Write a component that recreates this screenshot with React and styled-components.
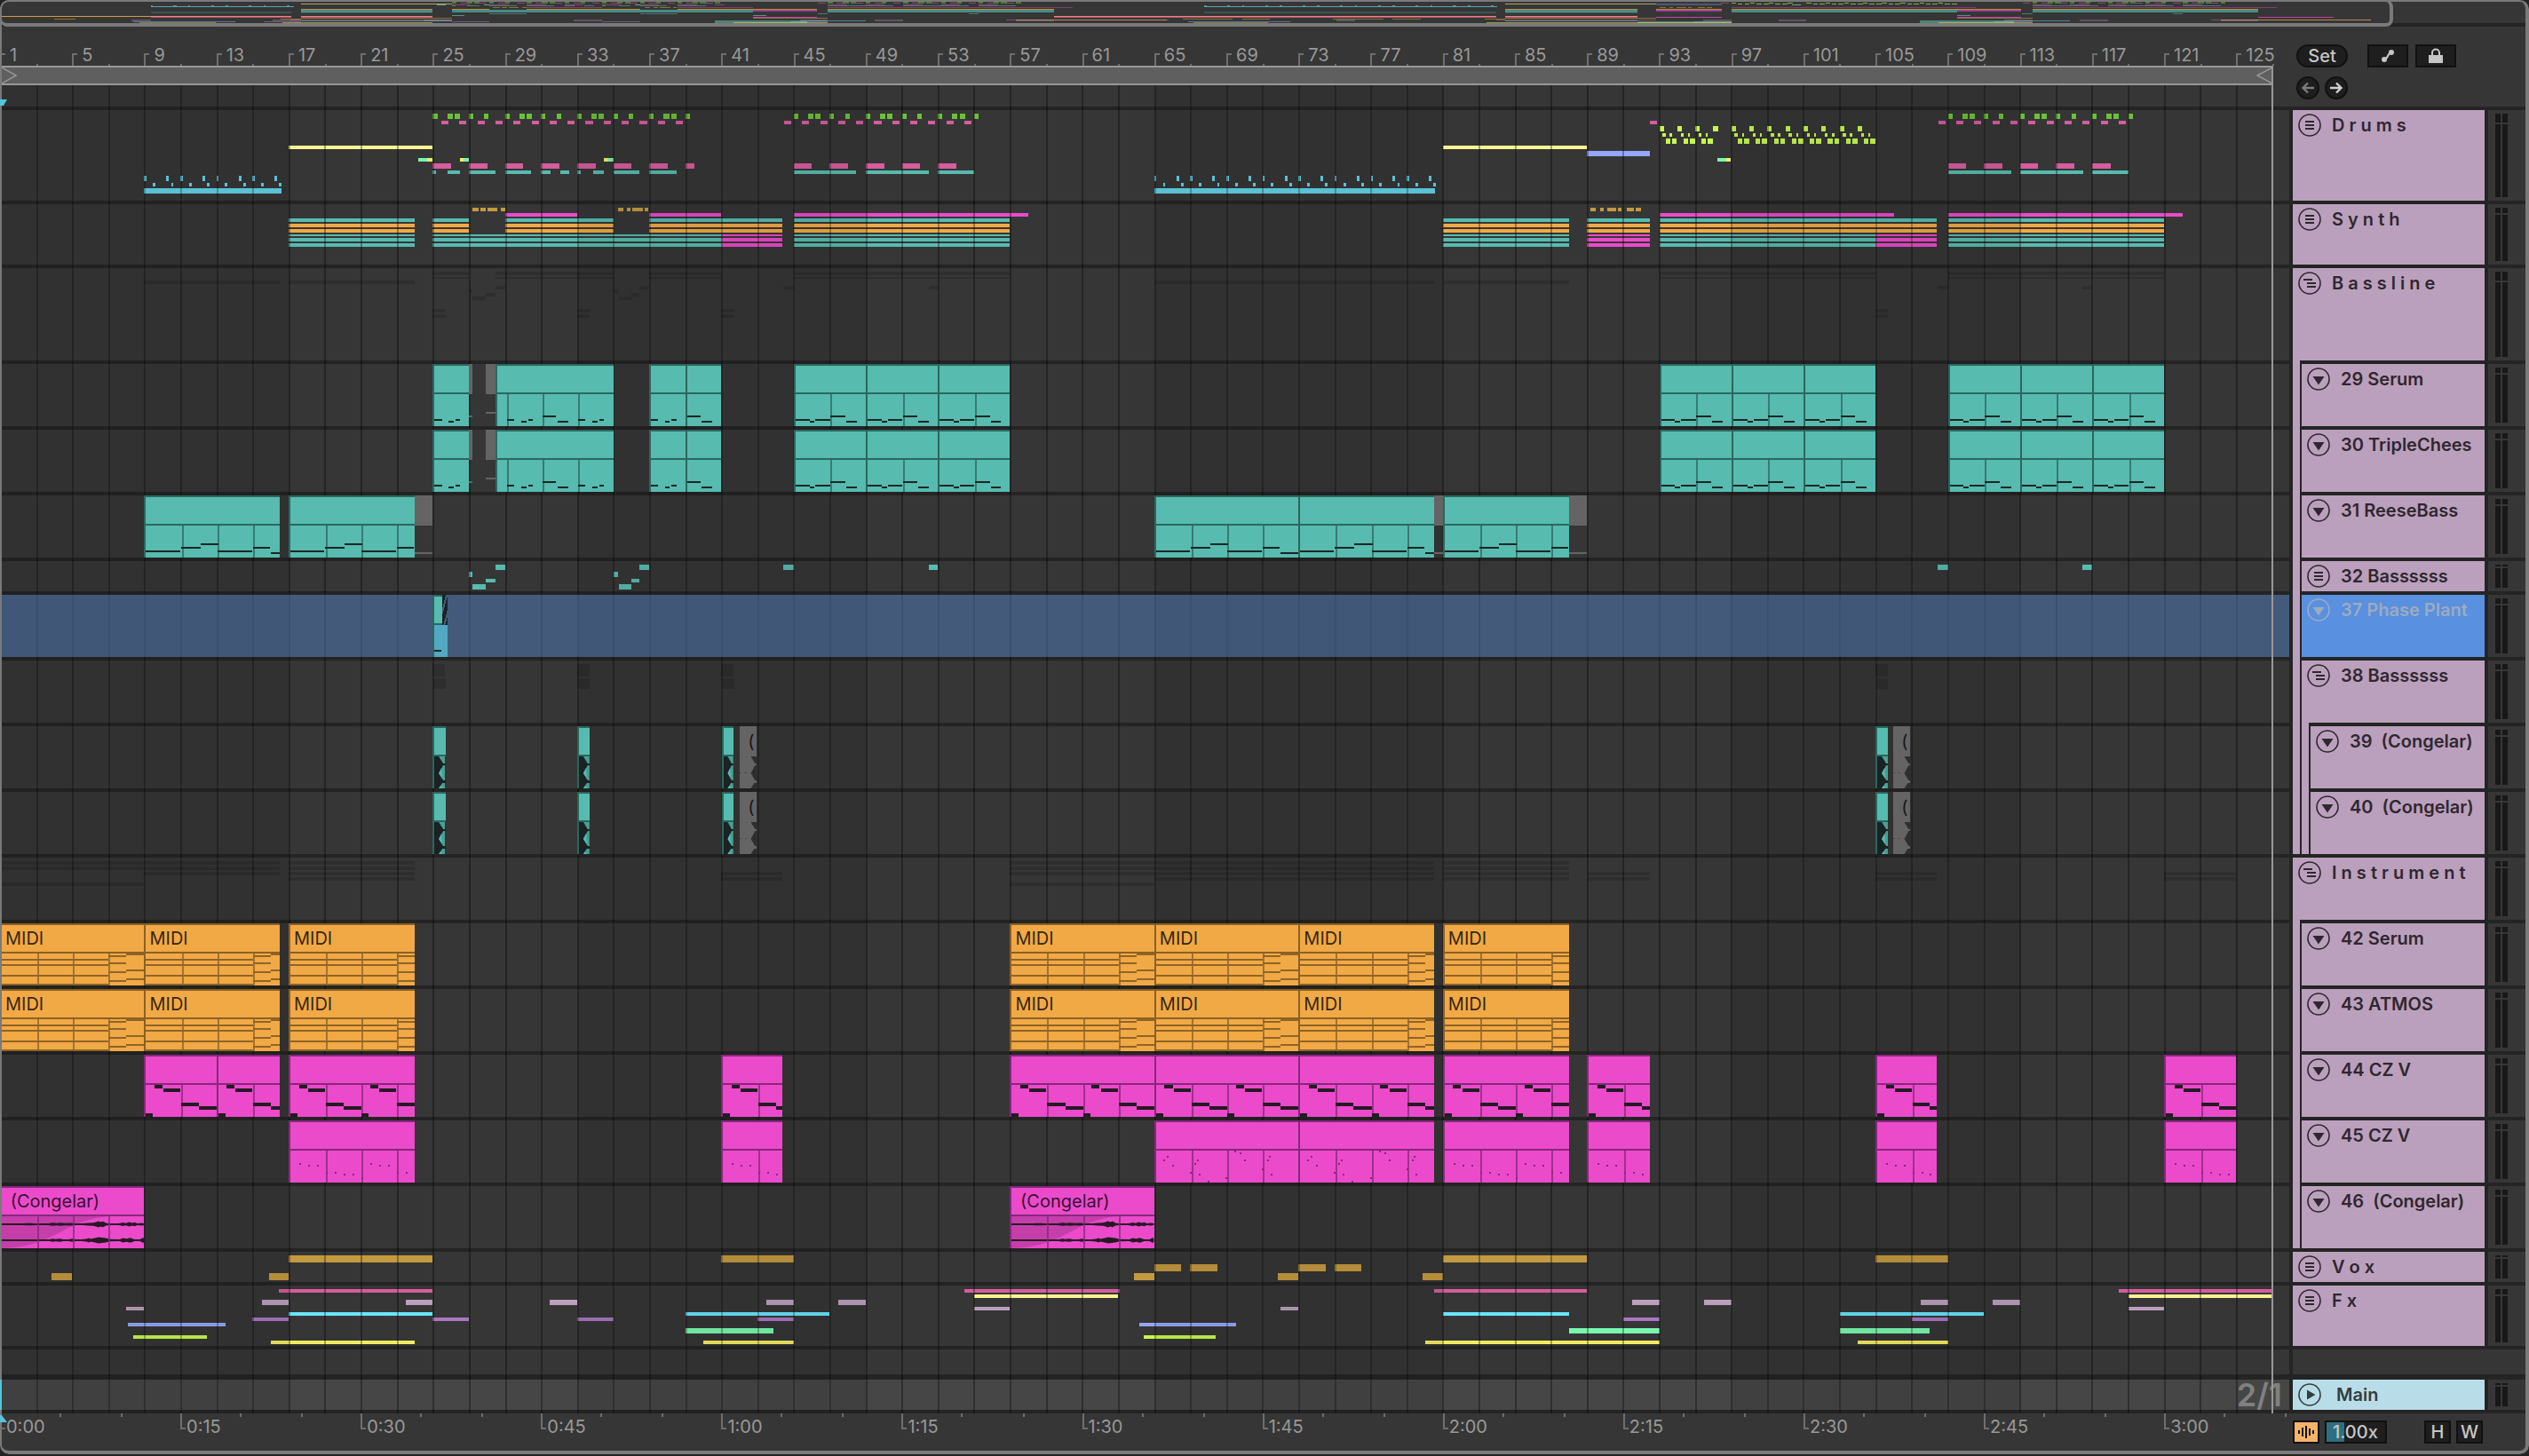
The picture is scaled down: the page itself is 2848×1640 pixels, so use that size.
import React from "react";
import styled, { createGlobalStyle } from "styled-components";

const GlobalStyle = createGlobalStyle`
    * {
        box-sizing: border-box;
    }

    body {
        margin: 0;
        background: #232323;
        font-family: Inter, "Liberation Sans", sans-serif;
        font-size: 20px;
        line-height: 24px;
    }

    button, input {
        font: inherit;
        margin: 0;
        padding: 0;
        border: 0;
        background: none;
        color: inherit;
    }
`

/* ---------- colours ---------- */

const TEAL = "#57bbaf";
const TEAL_LINE = "#2a675f";
const ORANGE = "#f1a946";
const ORANGE_LINE = "#8b6024";
const MAGENTA = "#eb4acb";
const MAGENTA_LINE = "#86287a";
const PINK = "#d65d9e";
const GREEN = "#6ac236";
const LIME = "#c7f84e";
const CYAN = "#63d2e8";
const AQUA = "#6ae4fc";
const PALE = "#fbf491";
const YELLOW = "#f4ec62";
const BLUE = "#96a6fb";
const MINT = "#7af8ae";
const OCHRE = "#c49a3f";
const MAUVE = "#bba0bd";
const PURPLE = "#a877c0";
const GHOST = "rgba(0, 0, 0, 0.14)";
const OFF = "#646464";

/* ---------- time ---------- */

// bars that fit in the arrangement view and in the overview strip
const BARS = 126.93;
const OVERVIEW_BARS = 134.2;

const place = (from, to, total = BARS) => ({
    left: `${((from - 1) / total) * 100}%`,
    width: `${((to - from) / total) * 100}%`,
});

const range = (from, to, step = 1) => {
    const list = [];
    for (let n = from; n <= to; n += step) list.push(n);
    return list;
};

/* ---------- notes of the folded groups: [from, to] in bars ---------- */

const kick = (n) => [[n, n + 0.25], [n + 0.8, n + 1.1], [n + 1.2, n + 1.5], [n + 2, n + 2.25]];
const kickFull = (n) => [...kick(n), [n + 2.85, n + 3.1]];
const hit = (offset, width) => (n) => [n + offset, n + offset + width];

const chords = [[17, 24], [25, 27], [29, 35], [37, 44.4], [45, 57], [81, 88], [89, 92.5], [93, 108.4], [109, 121]];
const pads = [[17, 24], [25, 41], [45, 57], [81, 88], [93, 105], [109, 121]];
const leads = [[41, 44.4], [89, 92.5], [105, 108.4]];
const bassSteps = [
    { y: 4, h: 6, at: [[28.45, 29], [36.45, 37], [44.45, 45], [52.5, 53], [108.45, 109], [116.45, 117]] },
    { y: 12, h: 6, at: [[27, 27.2], [35, 35.25]] },
    { y: 20, h: 4, at: [[27.95, 28.45], [36, 36.45]] },
    { y: 26, h: 6, at: [[27.2, 27.95], [35.3, 36]] },
];

const DRUMS = [
    { y: 4, h: 6, color: GREEN, at: [25, 29, 33, 45, 49, 109, 113].flatMap(kickFull).concat([37, 53, 117].flatMap(kick)) },
    { y: 12, h: 4, color: PINK, at: [...range(25, 38), ...range(44, 54), 92, ...range(108, 118)].map(hit(0.47, 0.4)) },
    { y: 18, h: 6, color: LIME, at: range(93, 104).map(hit(0, 0.25)) },
    { y: 26, h: 4, color: LIME, at: range(93, 104).filter((n) => n !== 96).flatMap((n) => [[n + 0.18, n + 0.35], [n + 0.58, n + 0.7]]) },
    { y: 32, h: 6, color: LIME, at: range(93, 104).filter((n) => n !== 96).flatMap((n) => [[n + 0.35, n + 0.6], [n + 0.7, n + 0.98]]) },
    { y: 40, h: 4, color: PALE, at: [[17, 25], [81, 89]] },
    { y: 46, h: 6, color: BLUE, at: [[89, 92.5]] },
    { y: 54, h: 4, color: MINT, at: [[24.2, 24.7], [26.7, 27], [34.75, 35], [96.2, 96.7]] },
    { y: 54, h: 4, color: YELLOW, at: [[24.7, 25], [26.5, 26.7], [34.5, 34.75], [96.7, 96.95]] },
    { y: 60, h: 6, color: PINK, at: [...range(25, 37, 2), ...range(45, 53, 2), ...range(109, 117, 2)].map(hit(0, 1.02)).concat([[39, 39.5]]) },
    {
        y: 68, h: 4, color: TEAL,
        at: [[25, 25.2], [25.8, 26.5], [27, 28.45], [29, 30.45], [31, 31.55], [32.05, 32.55], [33, 33.2], [33.9, 34.5], [35, 36.45],
            [37, 38.5], [45, 48.45], [49, 52.5], [53, 55], [109, 112.5], [113, 116.5], [117, 119]],
    },
    {
        y: 74, h: 6, color: CYAN,
        at: [...range(9, 16), ...range(65, 80)].map((n) => (n % 2 ? [n, n + 0.12] : [n + 0.22, n + 0.37])),
    },
    { y: 82, h: 4, color: CYAN, at: [...range(9, 16), ...range(65, 80)].map(hit(0.48, 0.14)) },
    { y: 88, h: 6, color: CYAN, at: [[9, 16.6], [65, 80.55]] },
];

const SYNTH = [
    {
        y: 4, h: 4, color: OCHRE,
        at: [[27.2, 27.55], [27.65, 27.95], [28.05, 28.55], [28.75, 29], [35.25, 35.55], [35.75, 35.95], [36.05, 36.65], [36.75, 36.95],
            [89.2, 89.5], [89.7, 89.9], [90.1, 90.6], [90.7, 90.9], [91.2, 91.6], [91.7, 92]],
    },
    { y: 10, h: 4, color: MAGENTA, at: [[29, 33], [37, 41], [45, 58], [93, 106], [109, 122]] },
    { y: 16, h: 4, color: TEAL, at: chords },
    { y: 22, h: 4, color: ORANGE, at: chords },
    { y: 28, h: 4, color: ORANGE, at: chords },
    { y: 34, h: 2, color: TEAL, at: pads },
    { y: 38, h: 4, color: TEAL, at: pads },
    { y: 44, h: 4, color: TEAL, at: pads },
    { y: 34, h: 2, color: MAGENTA, at: leads },
    { y: 38, h: 4, color: MAGENTA, at: leads },
    { y: 44, h: 4, color: MAGENTA, at: leads },
];

const serumGhost = [[25, 27], [28.45, 35], [37, 41], [45, 57], [93, 105], [109, 121]];
const BASSLINE = [
    { y: 4, h: 4, color: GHOST, at: serumGhost },
    { y: 10, h: 2, color: GHOST, at: serumGhost },
    { y: 14, h: 4, color: GHOST, at: [[9, 16.5], [17, 24], [65, 80.5], [81, 88]] },
    { y: 20, h: 4, color: GHOST, at: bassSteps[0].at },
    { y: 24, h: 4, color: GHOST, at: bassSteps[1].at },
    { y: 28, h: 4, color: GHOST, at: bassSteps[2].at },
    { y: 32, h: 4, color: GHOST, at: bassSteps[3].at },
    { y: 46, h: 4, color: GHOST, at: [25, 33, 41, 105].map(hit(0, 0.7)) },
    { y: 52, h: 4, color: GHOST, at: [25, 33, 41, 105].map(hit(0, 0.7)) },
];

const BASS_FOLD = [
    { y: 4, h: 14, color: GHOST, at: [25, 33, 41, 105].map(hit(0, 0.68)) },
    { y: 20, h: 12, color: GHOST, at: [25, 33, 41, 105].map(hit(0.05, 0.65)) },
];

const czGhost = [[17, 24], [41, 44.4], [65, 80.5], [81, 88], [89, 92.5], [105, 108.4], [121, 125]];
const INSTRUMENT = [
    { y: 4, h: 4, color: GHOST, at: [[1, 16.5], [17, 24], [57, 80.5], [81, 88]] },
    { y: 10, h: 4, color: GHOST, at: [[1, 16.5], [17, 24], [57, 80.5], [81, 88]] },
    { y: 16, h: 4, color: GHOST, at: [[9, 16.5], [57, 65], ...czGhost] },
    { y: 22, h: 4, color: GHOST, at: czGhost },
    { y: 28, h: 4, color: GHOST, at: [[1, 9], [57, 65]] },
];

const VOX = [
    { y: 4, h: 8, color: OCHRE, at: [[17, 25], [41, 45], [81, 89], [105, 109]] },
    { y: 14, h: 8, color: OCHRE, at: [[65, 66.5], [67, 68.5], [73, 74.5], [75, 76.5]] },
    { y: 24, h: 8, color: OCHRE, at: [[3.87, 5], [15.9, 17], [63.85, 65], [71.85, 73], [79.9, 81]] },
];

const FX = [
    { y: 4, h: 4, color: PINK, at: [[16.45, 25], [54.45, 63.1], [80.5, 89], [118.5, 127]] },
    { y: 10, h: 4, color: PALE, at: [[55, 63], [119, 127]] },
    { y: 16, h: 6, color: MAUVE, at: [15.5, 23.5, 31.5, 43.5, 47.5, 91.5, 95.5, 107.5, 111.5].map(hit(0, 1.5)) },
    { y: 24, h: 4, color: MAUVE, at: [[8, 9], [55, 57], [72, 73], [119, 121]] },
    { y: 30, h: 4, color: AQUA, at: [[17, 25], [39, 47], [81, 88], [103, 111]] },
    { y: 36, h: 4, color: PURPLE, at: [15, 25, 33, 43, 91, 107].map(hit(0, 2)) },
    { y: 42, h: 4, color: BLUE, at: [[8.1, 13.5], [64.15, 69.55]] },
    { y: 48, h: 6, color: MINT, at: [[39, 43.9], [88, 93], [103, 108]] },
    { y: 56, h: 4, color: LIME, at: [[8.4, 12.45], [64.4, 68.4]] },
    { y: 62, h: 4, color: YELLOW, at: [[16, 24], [40, 45], [80, 93], [104, 109]] },
];

/* ---------- clips of the open tracks, notes: [start, length, y] ---------- */

const riffA = [[0, 0.42, 62], [0.8, 0.3, 64], [1.2, 0.28, 62]];
const riffB = [[0, 0.78, 58], [0.85, 0.6, 64]];
const riffLong = [[0, 0.8, 62], [0.8, 0.3, 64], [1.15, 0.82, 62], [2, 0.85, 58], [2.9, 0.6, 64]];
const shift = (notes, by) => notes.map(([s, l, y]) => [s + by, l, y]);

const serumClips = [
    { from: 25, to: 27, notes: riffA },
    { from: 27, to: 27.2, off: true, notes: [[0, 1, 58]] },
    { from: 27.95, to: 28.45, off: true, notes: [[0, 1, 54]] },
    { from: 28.45, to: 35, notes: [...shift(riffA, 0.55), ...shift(riffB, 2.55), ...shift(riffA, 4.55)] },
    { from: 37, to: 39, notes: riffA },
    { from: 39, to: 41, notes: riffB },
    ...[45, 49, 53, 93, 97, 101, 109, 113, 117].map((n) => ({ from: n, to: n + 4, notes: riffLong })),
];

const reese = [[0, 1.9, 62], [1.95, 1.1, 58], [3.05, 1, 54], [4, 1.95, 62], [6, 0.95, 58], [7, 1, 64]];
const reeseClips = [
    { from: 9, to: 16.5, notes: reese },
    { from: 17, to: 24, notes: reese },
    { from: 24, to: 25, off: true, notes: [[0, 1, 64]] },
    { from: 65, to: 73, notes: reese },
    { from: 73, to: 80.5, notes: reese },
    { from: 80.5, to: 81, off: true, notes: [[0, 1, 64]] },
    { from: 81, to: 88, notes: reese },
    { from: 88, to: 89, off: true, notes: [[0, 1, 64]] },
];

const plantClips = [{ from: 25, to: 25.8, hatched: true, notes: [[0, 0.4, 62]] }];

const frozenClips = [
    { from: 25, to: 25.7, frozen: true },
    { from: 33, to: 33.68, frozen: true },
    { from: 41.05, to: 41.68, frozen: true },
    { from: 42, to: 42.95, frozen: true, off: true },
    { from: 105, to: 105.7, frozen: true },
    { from: 105.95, to: 106.9, frozen: true, off: true },
];

const midiNotes = [
    [0, 6, 40], [0, 6, 46], [0, 6, 58], [0, 6, 68],
    [6, 1, 36], [6, 1, 44], [6, 1, 54], [6, 1, 64],
    [7, 1, 34], [7, 1, 52], [7, 1, 62],
];
const midiClips = [[1, 9], [9, 16.5], [17, 24], [57, 65], [65, 73], [73, 80.5], [81, 88]].map(
    ([from, to]) => ({ from, to, title: "MIDI", notes: midiNotes })
);

const czRiff = [[0, 0.4, 66], [0.48, 0.45, 34], [1, 0.95, 38], [2, 1, 54], [3, 1, 58]];
const czNotes = [...czRiff, ...shift(czRiff, 4)];
const czClips = [[9, 13], [13, 16.5], [17, 24], [41, 44.4], [57, 65], [65, 73], [73, 80.5], [81, 88], [89, 92.5], [105, 108.4], [121, 125]].map(
    ([from, to]) => ({ from, to, notes: czNotes })
);

const dotRiff = [[0.5, 48], [1, 50], [1.5, 50], [2, 58], [2.5, 58], [3, 60], [3.5, 60], [4, 64]];
const dotsShort = [...dotRiff, ...dotRiff.map(([s, y]) => [s + 4, y])];
const dotsWide = [
    [0.4, 44], [0.6, 40], [0.9, 50], [1.9, 58], [2.15, 48], [2.3, 44], [2.4, 60], [2.9, 68],
    [3.9, 64], [4.4, 34], [4.7, 36], [4.95, 44], [5.95, 54], [6.25, 44], [6.35, 40], [6.45, 60],
];
const dotClips = [[17, 24], [41, 44.4], [65, 73], [73, 80.5], [81, 88], [89, 92.5], [105, 108.4], [121, 125]].map(
    ([from, to]) => ({ from, to, dots: from === 65 || from === 73 ? dotsWide : dotsShort })
);

const audioClips = [
    { from: 1, to: 9, title: " (Congelar)", wave: true },
    { from: 57, to: 65, title: " (Congelar)", wave: true },
];

const teal = { color: TEAL, line: TEAL_LINE, ink: "#1c2525" };
const orange = { color: ORANGE, line: ORANGE_LINE, ink: "#8f6427" };
const magenta = { color: MAGENTA, line: MAGENTA_LINE, ink: "#251a24" };

const TRACKS = [
    { name: "D r u m s", icon: "list", height: 102, rows: DRUMS },
    { name: "S y n t h", icon: "list", height: 68, rows: SYNTH },
    {
        name: "B a s s l i n e", icon: "group", height: 104, rows: BASSLINE,
        children: [
            { name: "29 Serum", icon: "fold", height: 70, clips: serumClips, look: teal },
            { name: "30 TripleChees", icon: "fold", height: 70, clips: serumClips, look: teal },
            { name: "31 ReeseBass", icon: "fold", height: 70, clips: reeseClips, look: teal },
            { name: "32 Bassssss", icon: "list", height: 34, rows: bassSteps.map((r) => ({ ...r, color: TEAL })) },
            { name: "37 Phase Plant", icon: "fold", height: 70, clips: plantClips, look: teal, selected: true },
            {
                name: "38 Bassssss", icon: "group", height: 70, rows: BASS_FOLD,
                children: [
                    { name: "39  (Congelar)", icon: "fold", height: 70, clips: frozenClips, look: teal },
                    { name: "40  (Congelar)", icon: "fold", height: 70, clips: frozenClips, look: teal },
                ],
            },
        ],
    },
    {
        name: "I n s t r u m e n t", icon: "group", height: 70, rows: INSTRUMENT,
        children: [
            { name: "42 Serum", icon: "fold", height: 70, clips: midiClips, look: orange },
            { name: "43 ATMOS", icon: "fold", height: 70, clips: midiClips, look: orange },
            { name: "44 CZ V", icon: "fold", height: 70, clips: czClips, look: magenta, thick: true },
            { name: "45 CZ V", icon: "fold", height: 70, clips: dotClips, look: magenta },
            { name: "46  (Congelar)", icon: "fold", height: 70, clips: audioClips, look: magenta },
        ],
    },
    { name: "V o x", icon: "list", height: 34, rows: VOX },
    { name: "F x", icon: "list", height: 68, rows: FX },
];

const flatten = (tracks) => tracks.flatMap((t) => [t, ...flatten(t.children || [])]);
const FLAT = flatten(TRACKS);

/* ---------- overview strip ---------- */

const spans = (clips) => clips.filter((c) => !c.off).map((c) => [c.from, c.to]);
const MINI = [
    { y: 2, h: 2, color: GREEN, at: DRUMS[0].at, dim: 0.5 },
    { y: 3, h: 1, color: PINK, at: DRUMS[1].at, dim: 0.5 },
    { y: 3, h: 1, color: LIME, at: DRUMS[2].at, dim: 0.6 },
    { y: 4, h: 1, color: LIME, at: DRUMS[4].at, dim: 0.6 },
    { y: 4, h: 1, color: PALE, at: DRUMS[5].at, dim: 0.6 },
    { y: 4, h: 2, color: BLUE, at: DRUMS[6].at, dim: 0.3 },
    { y: 5, h: 1, color: MINT, at: DRUMS[7].at, dim: 0.6 },
    { y: 5, h: 1, color: PINK, at: DRUMS[9].at, dim: 0.45 },
    { y: 6, h: 1, color: TEAL, at: DRUMS[10].at, dim: 0.5 },
    { y: 6, h: 1, color: CYAN, at: DRUMS[11].at, dim: 0.6 },
    { y: 7, h: 1, color: CYAN, at: DRUMS[13].at, dim: 0.7 },
    { y: 8, h: 1, color: OCHRE, at: SYNTH[0].at, dim: 0.6 },
    { y: 8, h: 1, color: MAGENTA, at: SYNTH[1].at, dim: 0.4 },
    { y: 10, h: 1, color: ORANGE, at: chords, dim: 0.75 },
    { y: 11, h: 3, color: TEAL, at: pads, dim: 0.65 },
    { y: 11, h: 2, color: MAGENTA, at: leads, dim: 0.6 },
    { y: 13, h: 2, color: TEAL, at: spans(reeseClips), dim: 0.22 },
    { y: 15, h: 1, color: TEAL, at: bassSteps.flatMap((r) => r.at), dim: 0.5 },
    { y: 17, h: 1, color: TEAL, at: [25, 41, 105].map(hit(0, 0.7)), dim: 0.7 },
    { y: 18, h: 1, color: ORANGE, at: spans(midiClips), dim: 0.85 },
    { y: 19, h: 1, color: MAGENTA, at: spans(czClips), dim: 0.75 },
    { y: 20, h: 1, color: OCHRE, at: VOX[0].at, dim: 0.6 },
    { y: 21, h: 1, color: OCHRE, at: [...VOX[1].at, ...VOX[2].at], dim: 0.6 },
    { y: 22, h: 1, color: PINK, at: FX[0].at, dim: 0.5 },
    { y: 22, h: 1, color: ORANGE, at: FX[1].at, dim: 0.6 },
    { y: 22, h: 2, color: MAUVE, at: [...FX[2].at, ...FX[3].at], dim: 0.3 },
    { y: 23, h: 1, color: AQUA, at: FX[4].at, dim: 0.45 },
    { y: 24, h: 1, color: PURPLE, at: FX[5].at, dim: 0.5 },
    { y: 24, h: 1, color: BLUE, at: FX[6].at, dim: 0.5 },
    { y: 24, h: 2, color: MINT, at: FX[7].at, dim: 0.4 },
    { y: 25, h: 1, color: LIME, at: FX[8].at, dim: 0.4 },
    { y: 25, h: 1, color: YELLOW, at: FX[9].at, dim: 0.5 },
];

/* ---------- styled parts ---------- */

const Window = styled.div`
    position: relative;
    padding: 0 4px 4px 0;
    margin-bottom: 2px;
    background: #363636;
    border-radius: 10px;
    overflow: hidden;

    &::after {
        content: "";
        position: absolute;
        inset: 0;
        z-index: 5;
        border: solid #7a7a7a;
        border-width: 2px 4px 4px 2px;
        border-radius: 10px;
        pointer-events: none;
    }
`

const Overview = styled.div`
    position: relative;
    height: 30px;
    border-bottom: 4px solid #242424;
`

const OverviewView = styled.div`
    position: absolute;
    top: 0;
    left: 0;
    height: 30px;
    border: solid #7a7a7a;
    border-width: 2px 4px 4px 2px;
    border-radius: 8px;
`

const Block = styled.div`
    position: absolute;
    top: ${(props) => props.$y}px;
    height: ${(props) => props.$h}px;
    background: ${(props) => props.$color};
    opacity: ${(props) => props.$dim || 1};
`

const Split = styled.div`
    display: grid;
    grid-template-columns: minmax(0, 1fr) 266px;
`

const Timeline = styled.div`
    position: relative;
    overflow: hidden;
`

const Ruler = styled.div`
    display: flex;
    height: 44px;
    align-items: flex-end;
    overflow: hidden;
`

const RulerCell = styled.div`
    position: relative;
    flex: 0 0 calc(400% / ${BARS});
    height: 24px;
    color: #989898;

    &::before {
        content: "";
        position: absolute;
        left: 0;
        bottom: 0;
        width: 4px;
        height: 12px;
        border-left: 2px solid #6e6e6e;
        border-top: 2px solid #6e6e6e;
    }

    &::after {
        content: "";
        position: absolute;
        left: 50%;
        bottom: 0;
        width: 2px;
        height: 2px;
        background: #6e6e6e;
    }
`

const RulerLabel = styled.span`
    display: block;
    margin-left: 11px;
`

const LoopBar = styled.div`
    display: flex;
    justify-content: space-between;
    width: calc(12600% / ${BARS});
    height: 22px;
    padding-left: 2px;
    background: #5f5f5f;
    border: solid #989898;
    border-width: 2px 0;
`

const Lanes = styled.div`
    position: relative;
    display: flex;
    flex-direction: column;
    gap: 4px;
    padding-bottom: 4px;
    background: #242424;
`

const Lane = styled.div`
    position: relative;
    height: ${(props) => props.$height}px;
    background: #363636;
    overflow: hidden;
`

const MainLane = styled(Lane)`
    margin-top: 2px;
    background: #464646;
`

const Selection = styled.div`
    position: absolute;
    inset: 0;
    z-index: 2;
    background: rgba(82, 126, 190, 0.5);
`

const GridOverlay = styled.div`
    position: absolute;
    inset: 0;
    z-index: 1;
    display: flex;
    overflow: hidden;
    pointer-events: none;
`

const GridCell = styled.div`
    flex: 0 0 calc(200% / ${BARS});
    border-left: 2px solid rgba(0, 0, 0, 0.33);
    background: ${(props) => (props.$dark ? "rgba(0, 0, 0, 0.08)" : "transparent")};
    background-clip: padding-box;
`

const EndLine = styled.div`
    position: absolute;
    top: 44px;
    bottom: 42px;
    left: calc(12600% / ${BARS});
    z-index: 4;
    width: 2px;
    margin-left: -1px;
    background: #989898;
`

const Zoom = styled.span`
    position: absolute;
    right: 8px;
    top: 0;
    z-index: 2;
    font-size: 36px;
    line-height: 34px;
    font-weight: 600;
    color: #808080;
`

const Marker = styled.svg`
    position: absolute;
    left: 0;
    bottom: 0;
    z-index: 6;
    display: block;
`

const TimeMarker = styled(Marker)`
    top: 0;
    bottom: auto;
`

const ClipBox = styled.div`
    position: absolute;
    top: 0;
    bottom: 0;
    z-index: 3;
    overflow: hidden;
    background: ${(props) => (props.$off ? "transparent" : props.$color)};
    border-left: ${(props) => (props.$off ? 0 : 2)}px solid ${(props) => props.$line};
`

const ClipTitle = styled.div`
    height: 34px;
    padding-left: 4px;
    line-height: 30px;
    white-space: pre;
    overflow: hidden;
    color: rgba(0, 0, 0, 0.8);
    background: ${(props) => (props.$off ? OFF : "transparent")};
    border: solid ${(props) => (props.$off ? OFF : props.$line)};
    border-width: 2px 0;
`

const Hatch = styled.div`
    position: absolute;
    top: 0;
    right: 0;
    width: 6px;
    height: 34px;
    background: repeating-linear-gradient(105deg, #1b2226 0 4px, #455b7b 4px 6px);
`

const Tint = styled.div`
    position: absolute;
    inset: 34px 0 0 0;
    background: #52a9c2;
`

const BodyLine = styled.div`
    position: absolute;
    top: 34px;
    bottom: 0;
    width: 2px;
    background: ${(props) => props.$line};
    opacity: 0.75;
`

const Note = styled.div`
    position: absolute;
    top: ${(props) => props.$y}px;
    height: ${(props) => (props.$thick ? 4 : 2)}px;
    min-width: 2px;
    background: ${(props) => props.$color};
`

const BodyDrawing = styled.svg`
    display: block;
    width: 100%;
    height: 36px;
`

const TimeRuler = styled.div`
    position: relative;
    display: flex;
    height: 42px;
    overflow: hidden;
`

const TimeCell = styled.div`
    position: relative;
    flex: 0 0 calc(1000% / ${BARS});
    padding: 3px 0 0 7px;
    color: #989898;

    &::before {
        content: "";
        position: absolute;
        left: 0;
        top: 0;
        width: 4px;
        height: 16px;
        border-left: 2px solid #6e6e6e;
        border-bottom: 2px solid #6e6e6e;
    }
`

const TimeTick = styled.i`
    position: absolute;
    top: 0;
    left: ${(props) => props.$left};
    width: 2px;
    height: 4px;
    background: #6e6e6e;
`

const Side = styled.div`
    display: flex;
    flex-direction: column;
`

const Controls = styled.div`
    display: flex;
    flex-direction: column;
    gap: 10px;
    height: 90px;
    padding: 20px 0 0 8px;
`

const ControlRow = styled.div`
    display: flex;
    gap: ${(props) => props.$gap}px;
`

const DarkButton = styled.button`
    display: flex;
    align-items: center;
    justify-content: center;
    width: ${(props) => props.$width}px;
    height: 26px;
    margin-right: ${(props) => props.$after || 0}px;
    border: 2px solid #111;
    border-radius: ${(props) => (props.$round ? 13 : 0)}px;
    background: ${(props) => props.$bg || "#1e1e1e"};
    color: #c6c6c6;
    line-height: 20px;
    font-weight: 500;
`

const TrackColumn = styled.div`
    display: grid;
    grid-template-columns: 216px 42px;
    column-gap: 4px;
    padding: 4px 0 4px 4px;
    background: #242424;
`

const MainColumn = styled(TrackColumn)`
    padding-top: 6px;
`

const Stack = styled.div`
    display: flex;
    flex-direction: column;
    gap: 4px;
`

const Group = styled.div`
    background: ${MAUVE};
`

const GroupTracks = styled.div`
    display: flex;
    flex-direction: column;
    gap: 4px;
    margin-left: 8px;
    padding-top: 4px;
    border-left: 2px solid #242424;
    background: #242424;
`

const Header = styled.div`
    display: flex;
    align-items: flex-start;
    gap: 12px;
    height: ${(props) => props.$height}px;
    padding: 4px 0 0 6px;
    overflow: hidden;
    background: ${(props) => (props.$selected ? "#5990e0" : MAUVE)};
    color: ${(props) => (props.$selected ? "#9dabc0" : "#2f272f")};
    font-weight: 600;
    line-height: 26px;
    white-space: pre;
`

const MainHeader = styled(Header)`
    background: #b9dde8;
    color: #333d40;
`

const FoldButton = styled.button`
    flex: none;
    width: 26px;
    height: 26px;
`

const MeterCell = styled.div`
    display: flex;
    gap: 2px;
    height: ${(props) => props.$height}px;
    padding: 4px 0 4px 8px;
    background: #363636;
`

const MeterBar = styled.div`
    width: 6px;
    border-top: ${(props) => props.$peak}px solid #181818;
    padding-top: 2px;
    background: #181818 content-box;
`

const EmptySide = styled.div`
    height: 28px;
    margin-left: 4px;
    background: #363636;
`

const SideBlock = styled.div`
    background: #242424;
`

const Footer = styled.div`
    display: flex;
    align-items: flex-start;
    gap: 6px;
    height: 42px;
    padding: 8px 48px 0 4px;
`

const Speed = styled.input`
    width: 70px;
    height: 26px;
    margin-right: auto;
    padding-left: 7px;
    border: 2px solid #111;
    background: linear-gradient(to right, #2d6f80 20px, #1e1e1e 20px);
    color: #c6c6c6;
    font-weight: 500;
`

/* ---------- drawings ---------- */

const TrackIcon = ({ kind }) => (
    <svg width="26" height="26" viewBox="0 0 26 26" fill="none" stroke="currentColor" strokeWidth="1.6">
        <circle cx="13" cy="13" r="12" />
        {kind === "fold" && <path d="M6.5 10h13L13 19.500z" fill="currentColor" stroke="none" />}
        {kind === "play" && <path d="M10 7.500v11l9.500-5.500z" fill="currentColor" stroke="none" />}
        {kind === "list" && <path d="M8 9h10M8 13h10M8 17h10" strokeWidth="2" />}
        {kind === "group" && <path d="M6 9h10M10 13h10M10 17h10" strokeWidth="1.8" />}
    </svg>
)

const FrozenBody = ({ off }) => {
    const shape = off ? "#2e2e2e" : "#4a9f95";
    return (
        <BodyDrawing viewBox={off ? "0 0 20 36" : "0 0 12 36"} preserveAspectRatio="none">
            <rect width="20" height="36" fill={off ? OFF : "#1b2223"} />
            <g transform={off ? "translate(8 0)" : ""}>
                <path d="M5 0H12V8H10ZM12 10H10L5 19L10 27H12ZM9 30L5 36H12V30Z" fill={shape} />
                {!off && <path d="M8 13L5 19L9 25ZM7 33L5 36H9Z" fill={TEAL} />}
            </g>
            {off && <path d="M0 0h1M7 0h1M0 18.500h2M6 18.500h2" stroke="#444" />}
        </BodyDrawing>
    )
}

const wavePath = (mid, points) => {
    const top = points.map(([x, a]) => `L${x} ${mid - a}`).join("");
    const bottom = [...points].reverse().map(([x, a]) => `L${x} ${mid + a}`).join("");
    return `M0 ${mid - 1}${top}L162 ${mid - 1}L162 ${mid + 1}${bottom}L0 ${mid + 1}Z`;
};

const upper = [[25, 1], [28, 1.3], [34, 1.3], [37, 1], [53, 1], [58, 1.7], [63, 1.3], [66, 1.8], [72, 1.2], [78, 1.4], [84, 1], [92, 1],
    [98, 1.6], [104, 1.8], [107, 2.4], [110, 3.4], [112, 2.6], [115, 3.2], [119, 1.3], [124, 1], [133, 1], [138, 2], [141, 1.3], [145, 2.4], [148, 1.6], [151, 2.2], [154, 1], [159, 1.5]];
const lower = [[54, 1], [58, 1.8], [61, 1.2], [66, 1.8], [70, 1], [76, 1], [80, 1.8], [84, 1], [90, 1], [96, 1.6], [99, 2.4], [101, 1.4],
    [106, 2.6], [110, 3.4], [114, 3], [118, 2.4], [123, 1.2], [134, 1], [138, 2.4], [142, 1.7], [146, 2.8], [151, 1], [157, 1], [161, 3]];

const WaveBody = () => (
    <BodyDrawing viewBox="0 0 162 36" preserveAspectRatio="none">
        <path d="M0 0H122C72 4 62 32 6 36H0Z" fill="rgba(0, 0, 0, 0.16)" />
        <path d={wavePath(9, upper)} fill="#251a24" />
        <path d={wavePath(27, lower)} fill="#251a24" />
    </BodyDrawing>
)

const AutomationIcon = () => (
    <svg width="20" height="20" viewBox="0 0 20 20" fill="#c6c6c6">
        <circle cx="6" cy="14" r="3" />
        <circle cx="14" cy="6" r="3" />
        <path d="M6 14C11 13 9 7 14 6" fill="none" stroke="#c6c6c6" strokeWidth="2" />
    </svg>
)

const LockIcon = () => (
    <svg width="18" height="18" viewBox="0 0 18 18">
        <rect x="1" y="8" width="16" height="9" fill="#c6c6c6" />
        <path d="M5 8V5.500a4 4 0 0 1 8 0V8" fill="none" stroke="#c6c6c6" strokeWidth="2" />
    </svg>
)

const ArrowIcon = ({ color, flip }) => (
    <svg width="18" height="18" viewBox="0 0 18 18" fill="none" stroke={color} strokeWidth="2.400">
        <path d={flip ? "M16 9H3M9 3.500L3.500 9L9 14.500" : "M2 9H15M9 3.500L14.500 9L9 14.500"} />
    </svg>
)

const FollowIcon = () => (
    <svg width="20" height="16" viewBox="0 0 20 16" stroke="#111" strokeWidth="2">
        <path d="M2 6v4M6 3v10M10 1v14M14 4v8M18 6v4" />
    </svg>
)

/* ---------- components ---------- */

const Rows = ({ rows, total }) =>
    rows.map((row, i) =>
        row.at.map(([from, to], j) => (
            <Block key={`${i}-${j}`} $y={row.y} $h={row.h} $color={row.color} $dim={row.dim} style={place(from, to, total)} />
        ))
    )

const Clip = ({ clip, look, thick }) => {
    const length = clip.to - clip.from;
    const pct = (bars) => `${(bars / length) * 100}%`;
    const lines = range(Math.ceil(clip.from), Math.ceil(clip.to) - 1).filter((n) => n % 2 === 1 && n > clip.from);
    const title = clip.frozen && clip.off ? " (" : clip.title;
    return (
        <ClipBox $color={look.color} $line={look.line} $off={clip.off} style={place(clip.from, clip.to)}>
            <ClipTitle $line={look.line} $off={clip.off}>{title}</ClipTitle>
            {clip.hatched && <Tint />}
            {clip.hatched && <Hatch />}
            {clip.frozen && <FrozenBody off={clip.off} />}
            {clip.wave && <WaveBody />}
            {!clip.off && lines.map((n) => <BodyLine key={n} $line={look.line} style={{ left: pct(n - clip.from) }} />)}
            {(clip.notes || []).map(([s, l, y], i) => (
                <Note key={i} $y={y} $thick={thick} $color={clip.off ? OFF : look.ink} style={{ left: pct(s), width: pct(l) }} />
            ))}
            {(clip.dots || []).map(([s, y], i) => (
                <Note key={i} $y={y} $color={look.line} style={{ left: pct(s) }} />
            ))}
        </ClipBox>
    )
}

const TrackHeader = ({ track }) => {
    const header = (
        <Header $height={track.height} $selected={track.selected}>
            <FoldButton type="button" aria-label={`Fold ${track.name}`}>
                <TrackIcon kind={track.icon} />
            </FoldButton>
            <span>{track.name}</span>
        </Header>
    );
    if (!track.children) return header;
    return (
        <Group>
            {header}
            <GroupTracks>
                {track.children.map((child) => <TrackHeader key={child.name} track={child} />)}
            </GroupTracks>
        </Group>
    )
}

const Meter = ({ height }) => {
    const peak = height > 100 ? 10 : height > 60 ? 6 : 2;
    return (
        <MeterCell $height={height}>
            <MeterBar $peak={peak} />
            <MeterBar $peak={peak} />
        </MeterCell>
    )
}

const clock = (seconds) => `${Math.floor(seconds / 60)}:${String(seconds % 60).padStart(2, "0")}`;

const App = () => {
    return (
        <Window>
            <GlobalStyle />
            <Overview>
                <Rows rows={MINI} total={OVERVIEW_BARS} />
                <OverviewView style={{ width: `${((BARS + 0.25) / OVERVIEW_BARS) * 100}%` }} />
            </Overview>
            <Split>
                <Timeline>
                    <Ruler>
                        {range(1, 125, 4).map((n) => (
                            <RulerCell key={n}>
                                <RulerLabel>{n}</RulerLabel>
                            </RulerCell>
                        ))}
                    </Ruler>
                    <LoopBar>
                        <svg width="18" height="18" viewBox="0 0 18 18" fill="none" stroke="#989898" strokeWidth="1.500">
                            <path d="M0 0L16 9L0 18" />
                        </svg>
                        <svg width="18" height="18" viewBox="0 0 18 18" fill="none" stroke="#989898" strokeWidth="1.500">
                            <path d="M18 0L1 9L18 18" />
                        </svg>
                    </LoopBar>
                    <Lanes>
                        <Lane $height={24}>
                            <Marker width="8" height="8" viewBox="0 0 8 8">
                                <path d="M0 0H8L4 7H0Z" fill="#57c4dc" />
                            </Marker>
                        </Lane>
                        {FLAT.map((track) => (
                            <Lane key={track.name} $height={track.height}>
                                {track.rows && <Rows rows={track.rows} />}
                                {track.selected && <Selection />}
                                {track.clips && track.clips.map((clip) => (
                                    <Clip key={clip.from} clip={clip} look={track.look} thick={track.thick} />
                                ))}
                            </Lane>
                        ))}
                        <Lane $height={28} />
                        <MainLane $height={34}>
                            <Marker width="2" height="34">
                                <rect width="2" height="34" fill="#57c4dc" />
                            </Marker>
                            <Zoom>2/1</Zoom>
                        </MainLane>
                        <GridOverlay>
                            {range(0, 63).map((i) => <GridCell key={i} $dark={Math.floor(i / 8) % 2 === 0} />)}
                        </GridOverlay>
                    </Lanes>
                    <TimeRuler>
                        {range(0, 180, 15).map((s) => (
                            <TimeCell key={s}>
                                {clock(s)}
                                <TimeTick $left="33%" />
                                <TimeTick $left="67%" />
                            </TimeCell>
                        ))}
                        <TimeMarker width="8" height="10" viewBox="0 0 8 10">
                            <path d="M0 2H2L8 10H0Z" fill="#57c4dc" />
                        </TimeMarker>
                    </TimeRuler>
                    <EndLine />
                </Timeline>
                <Side>
                    <Controls>
                        <ControlRow $gap={8}>
                            <DarkButton type="button" $width={58} $after={14} $round>Set</DarkButton>
                            <DarkButton type="button" $width={46} aria-label="Automation mode"><AutomationIcon /></DarkButton>
                            <DarkButton type="button" $width={46} aria-label="Lock envelopes"><LockIcon /></DarkButton>
                        </ControlRow>
                        <ControlRow $gap={6}>
                            <DarkButton type="button" $width={26} $round aria-label="Previous locator"><ArrowIcon color="#7c7c7c" flip /></DarkButton>
                            <DarkButton type="button" $width={26} $round aria-label="Next locator"><ArrowIcon color="#d0d0d0" /></DarkButton>
                        </ControlRow>
                    </Controls>
                    <SideBlock>
                        <TrackColumn>
                            <Stack>
                                {TRACKS.map((track) => <TrackHeader key={track.name} track={track} />)}
                            </Stack>
                            <Stack>
                                {FLAT.map((track) => <Meter key={track.name} height={track.height} />)}
                            </Stack>
                        </TrackColumn>
                        <EmptySide />
                        <MainColumn>
                            <MainHeader $height={34}>
                                <FoldButton type="button" aria-label="Fold Main"><TrackIcon kind="play" /></FoldButton>
                                <span> Main</span>
                            </MainHeader>
                            <Meter height={34} />
                        </MainColumn>
                    </SideBlock>
                    <Footer>
                        <DarkButton type="button" $width={30} $bg="#f7b366" aria-label="Follow"><FollowIcon /></DarkButton>
                        <Speed aria-label="Speed" defaultValue="1.00x" />
                        <DarkButton type="button" $width={30}>H</DarkButton>
                        <DarkButton type="button" $width={30}>W</DarkButton>
                    </Footer>
                </Side>
            </Split>
        </Window>
    )
}

export default App;
